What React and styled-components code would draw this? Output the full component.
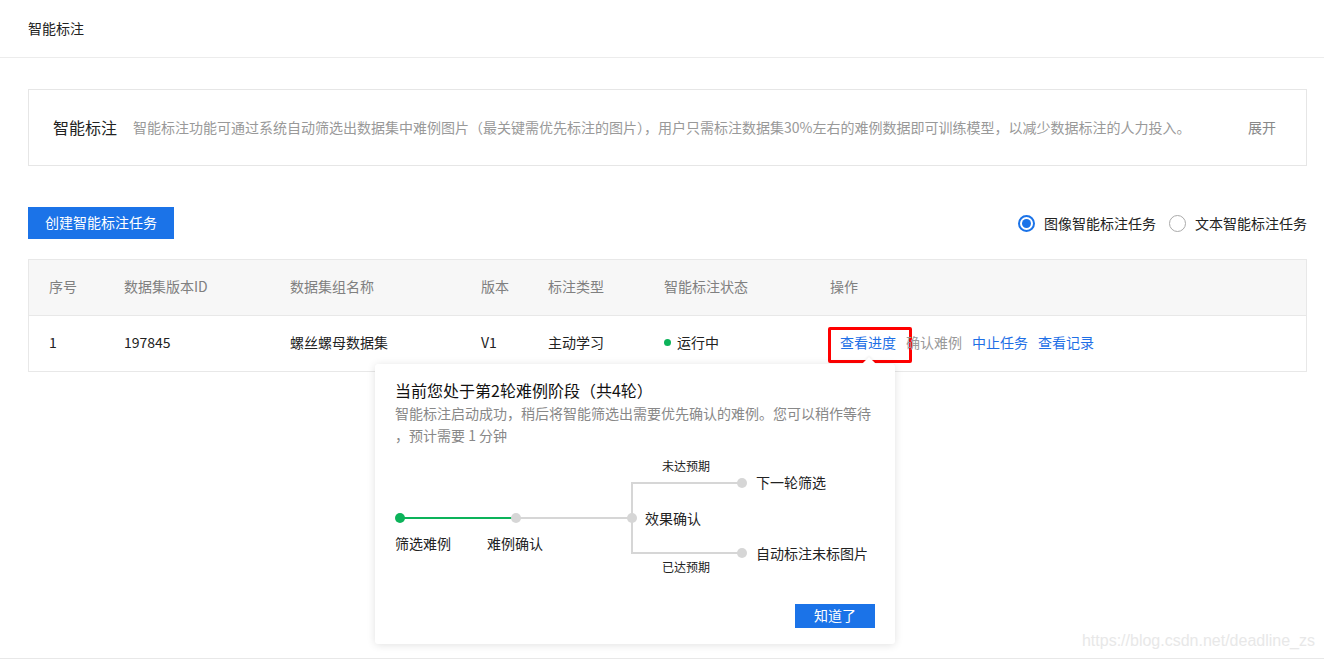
import React from "react";
import styled, { createGlobalStyle } from "styled-components";

const GlobalStyle = createGlobalStyle`
  html, body {
    margin: 0;
    padding: 0;
    background: #fff;
  }
  body {
    font-family: "Microsoft YaHei", "Noto Sans CJK SC", "Liberation Sans", sans-serif;
    color: #333;
    font-size: 14px;
  }
`;

const BLUE = "#1b73e8";
const LINK = "#1e6fe6";

const columns = [
  { key: "no", title: "序号" },
  { key: "id", title: "数据集版本ID" },
  { key: "name", title: "数据集组名称" },
  { key: "ver", title: "版本" },
  { key: "type", title: "标注类型" },
  { key: "status", title: "智能标注状态" },
  { key: "ops", title: "操作" },
];

const rows = [
  { no: "1", id: "197845", name: "螺丝螺母数据集", ver: "V1", type: "主动学习", status: "运行中" },
];

const actions = [
  { label: "查看进度", disabled: false, marked: true },
  { label: "确认难例", disabled: true },
  { label: "中止任务", disabled: false },
  { label: "查看记录", disabled: false },
];

const App = () => {
  return (
    <>
      <GlobalStyle />
      <Page>
        <TopBar>智能标注</TopBar>
        <Content>
          <IntroBox>
            <IntroTitle>智能标注</IntroTitle>
            <IntroText>
              智能标注功能可通过系统自动筛选出数据集中难例图片（最关键需优先标注的图片），用户只需标注数据集30%左右的难例数据即可训练模型，以减少数据标注的人力投入。
            </IntroText>
            <Expand>展开</Expand>
          </IntroBox>

          <Toolbar>
            <PrimaryButton>创建智能标注任务</PrimaryButton>
            <RadioGroup>
              <RadioItem>
                <RadioCircle checked />
                图像智能标注任务
              </RadioItem>
              <RadioItem>
                <RadioCircle />
                文本智能标注任务
              </RadioItem>
            </RadioGroup>
          </Toolbar>

          <TableWrap>
            <HeadRow>
              {columns.map((c) => (
                <Cell key={c.key}>{c.title}</Cell>
              ))}
            </HeadRow>
            {rows.map((r) => (
              <BodyRow key={r.id}>
                <Cell>{r.no}</Cell>
                <Cell>{r.id}</Cell>
                <Cell>{r.name}</Cell>
                <Cell>{r.ver}</Cell>
                <Cell>{r.type}</Cell>
                <Cell>
                  <StatusDot />
                  {r.status}
                </Cell>
                <Cell>
                  <Actions>
                    {actions.map((a) => (
                      <ActionLink key={a.label} disabled={a.disabled}>
                        {a.label}
                        {a.marked && <Marker />}
                      </ActionLink>
                    ))}
                  </Actions>
                </Cell>
              </BodyRow>
            ))}

            <Popover>
              <Arrow />
              <PopTitle>当前您处于第2轮难例阶段（共4轮）</PopTitle>
              <PopDesc>
                智能标注启动成功，稍后将智能筛选出需要优先确认的难例。您可以稍作等待
                <br />，预计需要 1 分钟
              </PopDesc>
              <Flow width="480" height="125" viewBox="0 0 480 125">
                <line x1="25" y1="64" x2="141" y2="64" stroke="#0cb35a" strokeWidth="2" />
                <line x1="141" y1="64" x2="257" y2="64" stroke="#d6d6d6" strokeWidth="2" />
                <polyline points="367,29 257,29 257,99 367,99" fill="none" stroke="#d6d6d6" strokeWidth="2" />
                <circle cx="25" cy="64" r="5" fill="#0cb35a" />
                <circle cx="141" cy="64" r="5" fill="#d6d6d6" />
                <circle cx="257" cy="64" r="5" fill="#d6d6d6" />
                <circle cx="367" cy="29" r="5" fill="#d6d6d6" />
                <circle cx="367" cy="99" r="5" fill="#d6d6d6" />
                <text x="20" y="89" fontSize="14">筛选难例</text>
                <text x="112" y="89" fontSize="14">难例确认</text>
                <text x="270" y="64" fontSize="14">效果确认</text>
                <text x="287" y="11" fontSize="12">未达预期</text>
                <text x="287" y="112" fontSize="12">已达预期</text>
                <text x="381" y="28" fontSize="14">下一轮筛选</text>
                <text x="381" y="99" fontSize="14">自动标注未标图片</text>
              </Flow>
              <PopFooter>
                <SmallButton>知道了</SmallButton>
              </PopFooter>
            </Popover>
          </TableWrap>
        </Content>
        <Watermark>https://blog.csdn.net/deadline_zs</Watermark>
      </Page>
    </>
  );
};

export default App;

const Page = styled.div`
  position: relative;
  height: 658px;
  border-bottom: 1px solid #e8e8e8;
  overflow: hidden;
`;

const TopBar = styled.div`
  height: 58px;
  display: flex;
  align-items: center;
  padding: 0 0 2px 28px;
  font-size: 14px;
  color: #222;
  border-bottom: 1px solid #ececec;
  box-sizing: border-box;
`;

const Content = styled.div`
  padding: 31px 17px 0 28px;
`;

const IntroBox = styled.div`
  height: 77px;
  box-sizing: border-box;
  border: 1px solid #e6e6e6;
  display: flex;
  align-items: center;
  padding: 0 30px 2px 24px;
`;

const IntroTitle = styled.div`
  font-size: 16px;
  color: #222;
  margin-right: 16px;
  white-space: nowrap;
`;

const IntroText = styled.div`
  flex: 1;
  font-size: 14px;
  color: #999;
  white-space: nowrap;
`;

const Expand = styled.div`
  font-size: 14px;
  color: #888;
`;

const Toolbar = styled.div`
  margin-top: 41px;
  display: flex;
  align-items: center;
  justify-content: space-between;
`;

const PrimaryButton = styled.button`
  height: 32px;
  padding: 0 17px 2px;
  border: none;
  background: ${BLUE};
  color: #fff;
  font-family: inherit;
  font-size: 14px;
  cursor: pointer;
`;

const RadioGroup = styled.div`
  display: flex;
  align-items: center;
  gap: 13px;
`;

const RadioItem = styled.label`
  display: flex;
  align-items: center;
  gap: 9px;
  font-size: 14px;
  color: #222;
`;

const RadioCircle = styled.span`
  width: 17px;
  height: 17px;
  box-sizing: border-box;
  border-radius: 50%;
  border: ${({ checked }) => (checked ? `2px solid ${BLUE}` : "1px solid #aaa")};
  display: flex;
  align-items: center;
  justify-content: center;
  &::after {
    content: "";
    width: 9px;
    height: 9px;
    border-radius: 50%;
    background: ${({ checked }) => (checked ? BLUE : "transparent")};
  }
`;

const TableWrap = styled.div`
  position: relative;
  margin-top: 20px;
  border: 1px solid #e8e8e8;
`;

const Row = styled.div`
  display: grid;
  grid-template-columns: 75px 166px 191px 67px 116px 166px 1fr;
  align-items: center;
  padding: 0 0 3px 20px;
  height: 55px;
  box-sizing: border-box;
  font-size: 14px;
`;

const HeadRow = styled(Row)`
  background: #f7f7f7;
  color: #808080;
  border-bottom: 1px solid #e8e8e8;
  height: 56px;
`;

const BodyRow = styled(Row)`
  color: #222;
`;

const Cell = styled.div`
  display: flex;
  align-items: center;
  white-space: nowrap;
`;

const StatusDot = styled.span`
  width: 7px;
  height: 7px;
  border-radius: 50%;
  background: #0cb35a;
  margin: 0 6px 0 0;
`;

const Actions = styled.div`
  display: flex;
  gap: 10px;
  padding-left: 10px;
`;

const ActionLink = styled.span`
  position: relative;
  color: ${({ disabled }) => (disabled ? "#999" : LINK)};
  cursor: ${({ disabled }) => (disabled ? "default" : "pointer")};
`;

const Marker = styled.span`
  position: absolute;
  left: -12px;
  top: -5px;
  width: 84px;
  height: 36px;
  box-sizing: border-box;
  border: 3px solid #f00;
  border-radius: 2px;
`;

const Popover = styled.div`
  position: absolute;
  left: 346px;
  top: 104px;
  width: 520px;
  height: 280px;
  box-sizing: border-box;
  padding: 14px 20px 16px;
  background: #fff;
  border-radius: 3px;
  box-shadow: 0 1px 8px rgba(0, 0, 0, 0.12);
  z-index: 5;
  display: flex;
  flex-direction: column;
`;

const Arrow = styled.span`
  position: absolute;
  top: -5px;
  left: 489px;
  width: 10px;
  height: 10px;
  background: #fff;
  transform: rotate(45deg);
  box-shadow: -1px -1px 2px rgba(0, 0, 0, 0.06);
`;

const PopTitle = styled.div`
  font-size: 16px;
  line-height: 24px;
  color: #111;
`;

const PopDesc = styled.div`
  font-size: 14px;
  line-height: 22px;
  color: #888;
`;

const Flow = styled.svg`
  display: block;
  margin: 8px 0 0 -20px;
  overflow: visible;
  text {
    font-family: "Microsoft YaHei", "Noto Sans CJK SC", sans-serif;
    fill: #222;
    dominant-baseline: central;
  }
`;

const PopFooter = styled.div`
  margin-top: auto;
  display: flex;
  justify-content: flex-end;
`;

const SmallButton = styled.button`
  width: 80px;
  height: 24px;
  padding: 0 0 2px;
  border: none;
  background: ${BLUE};
  color: #fff;
  font-family: inherit;
  font-size: 14px;
  cursor: pointer;
`;

const Watermark = styled.div`
  position: absolute;
  right: 9px;
  bottom: 8px;
  font-family: "Liberation Sans", Arial, sans-serif;
  font-size: 16px;
  color: #e8e8e8;
`;
